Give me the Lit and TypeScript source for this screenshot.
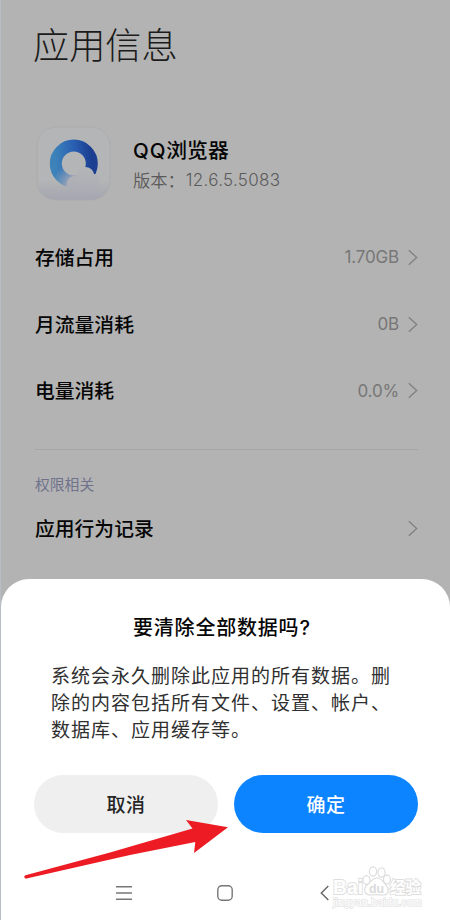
import { LitElement, html, css } from "lit";
import { customElement, property } from "lit/decorators.js";

@customElement("info-row")
class InfoRow extends LitElement {
  @property() label = "";
  @property() value = "";
  static styles = css`
    :host { display: flex; align-items: center; height: 66.7px; padding: 0 32px 0 35px; }
    .label { flex: 1; font-size: 19.8px; font-weight: 500; color: #060606; line-height: 28px; padding-bottom: 1px; }
    .value { font-family: Inter, sans-serif; font-size: 17px; font-weight: 400; color: #777; line-height: 28px; letter-spacing: -0.15px; }
    svg { display: block; width: 10px; height: 17px; margin-left: 9px; }
  `;
  render() {
    return html`<span class="label">${this.label}</span>
      <span class="value">${this.value}</span>
      <svg viewBox="0 0 10 17" fill="none" stroke="#808080" stroke-width="1.3"><path d="M.8 1.2 8.7 8.5 .8 15.8" /></svg>`;
  }
}

@customElement("app-root")
class AppRoot extends LitElement {
  static styles = css`
    :host {
      display: block; position: relative; box-sizing: border-box; width: 450px; height: 920px; overflow: hidden;
      background: #b3b3b3; border-left: 1px solid #b9bec4;
      font-family: "Noto Sans CJK SC", sans-serif;
    }
    .page { display: flex; flex-direction: column; margin-left: -1px; height: 920px; }
    h1 { margin: 16px 0 0 33px; font-size: 36.2px; line-height: 54px; height: 54px; font-weight: 300; color: #1b1b1b; }
    .app { display: flex; margin: 56px 0 0 36px; height: 76px; }
    .logo { width: 76px; height: 76px; display: block; }
    .meta { margin-left: 21px; padding-top: 9px; }
    .name { font-size: 20.8px; line-height: 28px; font-weight: 500; color: #050505; }
    .latin { font-family: Inter, sans-serif; font-size: 20.5px; letter-spacing: .9px; }
    .version { display: flex; font-size: 17.3px; line-height: 24px; margin-top: 3px; color: #5a5a5a; font-weight: 350; }
    .version .num { font-family: Inter, sans-serif; font-size: 17px; letter-spacing: .3px; margin-left: 1px; }
    .rows { margin-top: 22px; }
    .rule { height: 1px; background: #a5a5a5; margin: 25px 32px 0 35px; }
    .section { margin: 23px 0 0 35px; font-size: 14.8px; line-height: 22px; color: #70728c; }
    .last { margin-top: 0; }
    .sheet {
      position: absolute; left: 0; right: 0; bottom: 0; height: 341px; box-sizing: border-box;
      background: #fff; border-radius: 28px 28px 0 0; display: flex; flex-direction: column;
    }
    h2 { margin: 34px 0 0 132px; font-size: 20px; letter-spacing: .8px; line-height: 28px; font-weight: 500; color: #060606; white-space: nowrap; }
    h2 .q { font-family: Inter, sans-serif; }
    .body { margin: 19px 0 0 50px; font-size: 19px; letter-spacing: 1px; line-height: 27px; color: #303030; white-space: nowrap; }
    .actions { display: flex; gap: 16px; margin: 33px 32px 0 33px; }
    button { flex: 1; height: 58px; border: 0; border-radius: 30px; padding: 0 0 1px; font: 500 19px "Noto Sans CJK SC", sans-serif; letter-spacing: .6px; color: #262626; background: #efefef; }
    button.ok { background: #0d84ff; color: #fff; }
    .nav { display: grid; grid-template-columns: 16px 16px 10px; column-gap: 85px; margin: 51px 0 0 115px; }
    .nav svg { display: block; height: 18px; width: 100%; overflow: visible; }
    .nav svg:last-child { margin-left: 2px; }
    .arrow { position: absolute; left: 20px; top: 815px; width: 215px; height: 70px; }
    .mark { position: absolute; left: 330px; top: 862px; width: 96px; height: 50px; }
    .mark text { font-family: "Liberation Sans", "Noto Sans CJK SC", sans-serif; paint-order: stroke; }
  `;
  render() {
    return html`
      <div class="page">
        <h1>应用信息</h1>
        <div class="app">
          <svg class="logo" viewBox="0 0 76 76">
            <defs>
              <linearGradient id="tile" x2="0" y2="1"><stop offset=".72" stop-color="#b4b5b6" /><stop offset="1" stop-color="#a4a6b0" /></linearGradient>
              <linearGradient id="ring" x1="0" y1=".55" x2="1" y2=".5"><stop stop-color="#3d82b9" /><stop offset=".48" stop-color="#2b62b4" /><stop offset="1" stop-color="#1b3e91" /></linearGradient>
              <radialGradient id="fade" gradientUnits="userSpaceOnUse" cx="43" cy="61" r="27"><stop offset=".3" stop-color="#b0b2b8" /><stop offset="1" stop-color="#b0b2b8" stop-opacity="0" /></radialGradient>
              <linearGradient id="cloud" x2="0" y2="1"><stop stop-color="#b4b5b7" /><stop offset="1" stop-color="#abadb5" /></linearGradient>
              <clipPath id="left"><rect width="46" height="76" /></clipPath>
            </defs>
            <rect x="1" y="1" width="73" height="73" rx="19" fill="url(#tile)" stroke="#a9a9ab" stroke-width=".8" />
            <circle cx="37.8" cy="37.6" r="18" fill="none" stroke="url(#ring)" stroke-width="12" />
            <circle cx="37.8" cy="37.6" r="18" fill="none" stroke="url(#fade)" stroke-width="13" clip-path="url(#left)" />
            <path d="M31 64c-2-8 2-14 8-14 2-6 5-9 10-9 5 0 8 3 9 7 5 0 6 4 5 8-1 4-3 7-6 8z" fill="url(#cloud)" />
          </svg>
          <div class="meta">
            <div class="name"><span class="latin">QQ</span>浏览器</div>
            <div class="version">版本：<span class="num">12.6.5.5083</span></div>
          </div>
        </div>
        <div class="rows">
          <info-row label="存储占用" value="1.70GB"></info-row>
          <info-row label="月流量消耗" value="0B"></info-row>
          <info-row label="电量消耗" value="0.0%"></info-row>
        </div>
        <div class="rule"></div>
        <div class="section">权限相关</div>
        <info-row class="last" label="应用行为记录"></info-row>
      </div>
      <div class="sheet">
        <h2>要清除全部数据吗<span class="q">?</span></h2>
        <div class="body">系统会永久删除此应用的所有数据。删<br />除的内容包括所有文件、设置、帐户、<br />数据库、应用缓存等。</div>
        <div class="actions"><button>取消</button><button class="ok">确定</button></div>
        <div class="nav">
          <svg viewBox="0 0 16 18" stroke="#777" stroke-width="1.4"><path d="M0 2.7H16M0 9H16M0 15.2H16" /></svg>
          <svg viewBox="0 0 16 18" fill="none" stroke="#777" stroke-width="1.4"><rect x=".8" y="1.7" width="14.4" height="14.6" rx="4" /></svg>
          <svg viewBox="0 0 10 18" fill="none" stroke="#666" stroke-width="1.4"><path d="M8.3 2 1.3 9 8.3 16" /></svg>
        </div>
      </div>
      <svg class="arrow" viewBox="21 815 215 70"><path fill="#ed1c24" d="M25.5 875.2 110 852.5 192.5 828.5 186 820 228 827.3 194 853 195.3 842 130 855 26.5 878.5A1.7 1.7 0 0 1 25.5 875.2Z" /></svg>
      <svg class="mark" viewBox="331 862 96 50" fill="#fff" stroke="#dedede" stroke-width="1.2">
        <text x="333" y="893.5" font-size="20" font-weight="700" stroke-width="1.8" textLength="30" lengthAdjust="spacingAndGlyphs">Bai</text>
        <ellipse cx="366.5" cy="880" rx="3.5" ry="4.4" /><ellipse cx="373" cy="871.5" rx="3.6" ry="4.7" /><ellipse cx="381.5" cy="872.5" rx="3.6" ry="4.7" /><ellipse cx="387" cy="879.5" rx="3.5" ry="4.3" />
        <path d="M377 878c5 0 6 4 9 7s4 10-3 10c-4 0-7-1-12 0-7 0-8-6-4-10 4-3 5-7 10-7z" />
        <text x="369" y="892.5" font-size="13" font-weight="700" textLength="15" lengthAdjust="spacingAndGlyphs" fill="#dadada" stroke="none">du</text>
        <text x="390" y="893" font-size="15.5" font-weight="700" stroke-width="1.8">经验</text>
        <text x="333" y="905.5" font-size="11" textLength="89" lengthAdjust="spacingAndGlyphs" stroke-width="1.5" stroke="#e6e6e6">jingyan.baidu.com</text>
      </svg>`;
  }
}
